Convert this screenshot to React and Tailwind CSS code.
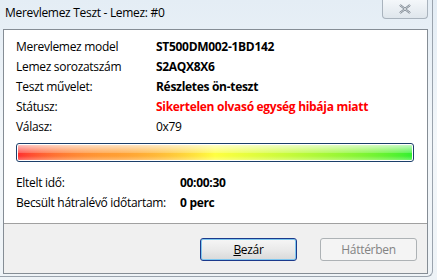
export default function App() {
  const rows = [
    { label: "Merevlemez model", value: "ST500DM002-1BD142", cls: "font-bold text-black" },
    { label: "Lemez sorozatszám", value: "S2AQX8X6", cls: "font-bold text-black" },
    { label: "Teszt művelet:", value: "Részletes ön-teszt", cls: "font-bold text-black" },
    { label: "Státusz:", value: "Sikertelen olvasó egység hibája miatt", cls: "font-bold text-[#ff0000]" },
    { label: "Válasz:", value: "0x79", cls: "text-black" },
  ];

  return (
    <div
      className="w-[437px] h-[280px] overflow-hidden bg-gradient-to-b from-[#e4edf5] via-[#f3f7fa] to-[#eef3f7] text-[12px] tracking-[-0.3px] text-black"
      style={{ fontFamily: '"Open Sans", "Noto Sans", sans-serif' }}
    >
      <div className="w-[433px] h-[277px] rounded-br-[6px] border-r border-b border-[#9aa3ad] flex flex-col">
        {/* title bar */}
        <div className="h-[29px] flex items-start justify-between">
          <div className="pl-[5px] pt-[5px] text-[12px] leading-[16px] text-black">Merevlemez Teszt - Lemez: #0</div>
          <div className="mr-[4px] w-[46px] h-[19px] rounded-b-[4px] border border-t-0 border-[#a9b3bd] bg-gradient-to-b from-[#f4f7fa] to-[#dfe6ec] flex items-center justify-center">
            <svg width="12" height="10" viewBox="0 0 12 10">
              <path d="M1 1 L11 9 M11 1 L1 9" stroke="#6b7682" strokeWidth="2.2" fill="none" />
              <path d="M1 1 L11 9 M11 1 L1 9" stroke="#f4f6f8" strokeWidth="0.8" fill="none" />
            </svg>
          </div>
        </div>

        {/* client area */}
        <div className="ml-[3px] mr-[4px] border border-[#858d95] flex flex-col">
          <div className="bg-white h-[194px] border-b border-[#a0a0a0] px-[12px] pt-[7px]">
            {rows.map((r) => (
              <div key={r.label} className="flex h-[20px] items-center">
                <div className="w-[140px]">{r.label}</div>
                <div className={r.cls}>{r.value}</div>
              </div>
            ))}

            <div className="mt-[6px] mr-[1px] h-[19px] rounded-[3px] border border-[#1c3f6a] p-[1px] bg-white">
              <div className="relative h-full w-full rounded-[1px] bg-gradient-to-r from-[#ff3030] via-[#ffff40] to-[#30f030]">
                <div className="absolute inset-0 bg-gradient-to-r from-transparent via-[#ff9a30]/60 to-transparent [background-size:50%_100%] bg-no-repeat"></div>
                <div className="absolute inset-x-0 top-0 h-[8px] bg-gradient-to-b from-white/70 to-white/20"></div>
                <div className="absolute inset-x-0 bottom-0 h-[4px] bg-gradient-to-b from-transparent to-white/30"></div>
              </div>
            </div>

            <div className="mt-[11px] flex h-[20px] items-center">
              <div className="w-[164px]">Eltelt idő:</div>
              <div className="font-bold">00:00:30</div>
            </div>
            <div className="flex h-[20px] items-center">
              <div className="w-[164px]">Becsült hátralévő időtartam:</div>
              <div className="font-bold">0 perc</div>
            </div>
          </div>

          <div className="bg-[#f0f0f0] h-[49px] flex items-start justify-end gap-[23px] pr-[10px] pt-[14px]">
            <button className="w-[97px] h-[23px] rounded-[3px] border border-[#1b3a8c] bg-gradient-to-b from-[#f6f6f6] via-[#eaeaea] to-[#d9d9d9] shadow-[inset_0_0_0_1px_#7ec6ee] text-[12px]">
              <span className="underline">B</span>ezár
            </button>
            <button className="w-[97px] h-[23px] rounded-[3px] border border-[#adb2b5] bg-[#f4f4f4] text-[12px] text-[#838383]">
              Háttérben
            </button>
          </div>
        </div>
      </div>
    </div>
  );
}
